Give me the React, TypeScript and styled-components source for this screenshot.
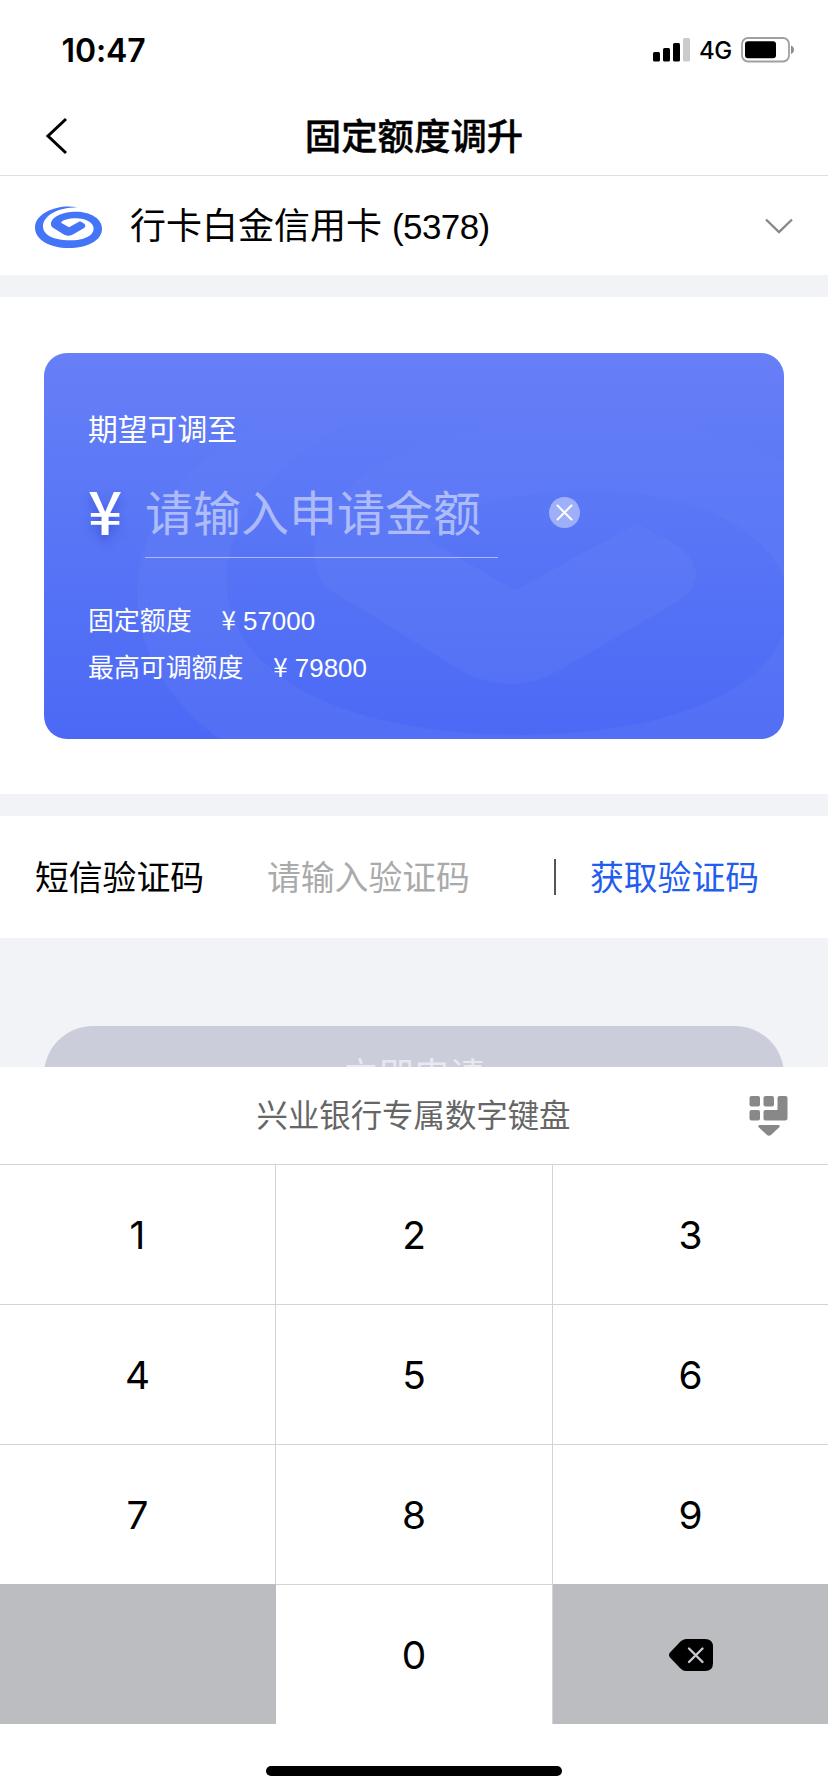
import React from "react";
import styled, { createGlobalStyle } from "styled-components";

const GlobalStyle = createGlobalStyle`
  * { box-sizing: border-box; }
  body {
    margin: 0;
    background: #fff;
    color: #000;
    font-family: "Liberation Sans", "Noto Sans CJK SC", sans-serif;
  }
`;

const Screen = styled.div`
  width: 828px;
  height: 1792px;
  display: flex;
  flex-direction: column;
  overflow: hidden;
  background: #fff;
`;

const StatusBar = styled.div`
  height: 98px;
  flex: none;
  display: flex;
  align-items: center;
  justify-content: space-between;
  padding: 1px 33px 0 61.5px;
  font-family: "Inter", sans-serif;
`;

const Clock = styled.span`
  padding-top: 1px;
  font-size: 32px;
  font-weight: 600;
  letter-spacing: -0.1px;
`;

const StatusIcons = styled.div`
  display: flex;
  align-items: center;
`;

const Network = styled.span`
  width: 51px;
  padding: 1px 0 0 9px;
  font-size: 24px;
  font-weight: 500;
  letter-spacing: -0.5px;
`;

const NavBar = styled.header`
  position: relative;
  height: 78px;
  flex: none;
  display: flex;
  align-items: center;
  justify-content: center;
  border-bottom: 1px solid #dfdfdf;
`;

const BackButton = styled.button`
  position: absolute;
  left: 44px;
  top: 18px;
  width: 26px;
  height: 40px;
  padding: 0;
  border: 0;
  background: none;
`;

const Title = styled.h1`
  margin: 0;
  padding-top: 2px;
  font-size: 36.4px;
  font-weight: 500;
  line-height: 78px;
  -webkit-text-stroke: 0.4px #000;
`;

const CardRow = styled.div`
  height: 99px;
  flex: none;
  display: flex;
  align-items: center;
  padding: 3px 35px 0;
`;

const CardName = styled.span`
  flex: 1;
  margin-left: 28px;
  font-size: 36px;
  line-height: 50px;
`;

const CardDigits = styled.span`
  font-size: 35px;
  letter-spacing: -0.6px;
`;

const Divider = styled.div`
  height: 22px;
  flex: none;
  background: #f2f3f7;
`;

const AmountSection = styled.section`
  height: 497px;
  flex: none;
  padding: 56px 44px 0;
`;

const AmountCard = styled.div`
  position: relative;
  height: 386px;
  padding: 0 44px;
  border-radius: 23px;
  overflow: hidden;
  color: #fff;
  background: linear-gradient(180deg, #677ff7 0%, #5a77f6 40%, #4b69f5 100%);
`;

const Watermark = styled.svg`
  position: absolute;
  inset: 0;
`;

const CardContent = styled.div`
  position: relative;
  display: flex;
  flex-direction: column;
  padding-top: 55px;
`;

const CardLabel = styled.div`
  font-size: 29.8px;
  line-height: 44px;
`;

const AmountRow = styled.div`
  display: flex;
  align-items: center;
  height: 84px;
  margin-top: 22px;
`;

const Currency = styled.span`
  width: 57px;
  margin-bottom: 15px;
  font-family: "Noto Sans CJK SC", sans-serif;
  font-size: 60px;
  font-weight: 500;
  line-height: 60px;
  text-shadow: 0 6px 10px rgba(40, 60, 190, 0.5);
`;

const AmountField = styled.div`
  width: 353px;
  height: 84px;
  border-bottom: 1px solid rgba(255, 255, 255, 0.5);
  color: rgba(255, 255, 255, 0.5);
  font-size: 48px;
  line-height: 81px;
  white-space: nowrap;
`;

const ClearButton = styled.button`
  width: 31px;
  height: 31px;
  margin: 0 0 7px 51px;
  padding: 0;
  border: 0;
  border-radius: 50%;
  background: rgba(255, 255, 255, 0.42);
  display: flex;
`;

const Limits = styled.div`
  margin-top: 40px;
`;

const LimitRow = styled.div`
  display: flex;
  gap: 30px;
  font-size: 25.9px;
  line-height: 47px;
`;

const Yen = styled.span`
  display: inline-block;
  width: 21.5px;
  font-family: "Noto Sans CJK SC", sans-serif;
  line-height: 30px;
`;

const CodeRow = styled.div`
  height: 122px;
  flex: none;
  display: flex;
  align-items: center;
  padding: 0 35px;
  font-size: 33.8px;
`;

const CodeLabel = styled.span`
  width: 232px;
  padding-bottom: 3px;
`;

const CodeField = styled.span`
  width: 287px;
  padding-bottom: 3px;
  color: #aaa;
`;

const Separator = styled.span`
  width: 2px;
  height: 36px;
  margin-bottom: 1px;
  background: #555;
`;

const SendCode = styled.span`
  margin-left: 34px;
  padding-bottom: 3px;
  color: #235cf0;
`;

const SubmitArea = styled.div`
  height: 129px;
  flex: none;
  padding: 88px 44px 0;
  overflow: hidden;
  background: #f2f3f7;
`;

const SubmitButton = styled.button`
  display: block;
  width: 740px;
  height: 98px;
  padding: 0 0 6px;
  border: 0;
  border-radius: 49px;
  background: #cbcdda;
  color: #e8e9f0;
  font: 35.5px "Liberation Sans", "Noto Sans CJK SC", sans-serif;
`;

const KeyboardHeader = styled.div`
  position: relative;
  height: 97px;
  flex: none;
  display: flex;
  align-items: center;
  justify-content: center;
  padding: 0 1px 5px 0;
  color: #666;
  font-size: 31.4px;
`;

const HideKeyboard = styled.svg`
  position: absolute;
  right: 40.5px;
  top: 28px;
`;

const Keypad = styled.div`
  flex: none;
  display: grid;
  grid-template-columns: 276px 277px 275px;
  grid-auto-rows: 140px;
`;

const Key = styled.button<{ $muted?: boolean; $edge?: boolean }>`
  display: flex;
  align-items: center;
  justify-content: center;
  padding: 0;
  border: 0 solid #d3d3d3;
  border-top-width: 1px;
  border-right-width: ${(p) => (p.$edge ? 0 : 1)}px;
  background: ${(p) => (p.$muted ? "#bcbdc1" : "#fff")};
  ${(p) => p.$muted && "border-color: #bcbdc1;"}
  color: #000;
  font-family: "Inter", sans-serif;
  font-size: 38.8px;
`;

const HomeArea = styled.div`
  flex: 1;
  display: flex;
  justify-content: center;
  padding-top: 42px;
`;

const HomeIndicator = styled.div`
  width: 296px;
  height: 10px;
  border-radius: 5px;
  background: #000;
`;

const SPIRAL =
  "M232 622C180 611 105 636 105 683C105 719 150 744 206 744C262 744 306 721 306 686C306 655 270 635 228 635C185 635 153 652 153 672C153 678 155 681 159 683L193 704Q207 711 220 703L251 685Q261 678 251 670L240 664L207 682L183 668C188 660 205 655 228 655C258 655 281 668 281 686C281 708 250 721 208 721C163 721 129 706 129 679C129 650 168 623 232 622Z";

const digits = ["1", "2", "3", "4", "5", "6", "7", "8", "9"];

const limits = [
  { label: "固定额度", value: "57000" },
  { label: "最高可调额度", value: "79800" },
];

export default function App() {
  return (
    <Screen>
      <GlobalStyle />
      <StatusBar>
        <Clock>10:47</Clock>
        <StatusIcons>
          <svg width="37" height="24" viewBox="0 0 37 24">
            <rect x="0" y="14" width="7" height="9.5" rx="1.5" />
            <rect x="10" y="10" width="7" height="13.5" rx="1.5" />
            <rect x="20" y="5" width="7" height="18.5" rx="1.5" />
            <rect x="30" y="0" width="7" height="23.5" rx="1.5" fill="#cbcbcb" />
          </svg>
          <Network>4G</Network>
          <svg width="54" height="26" viewBox="0 0 54 26">
            <rect x="1" y="1" width="47" height="23.5" rx="6" fill="none" stroke="#a0a0a0" strokeWidth="1.8" />
            <rect x="4" y="4.2" width="31" height="17" rx="3" />
            <path d="M50 8.500C54 10 54 15.500 50 17Z" fill="#8c8c8c" />
          </svg>
        </StatusIcons>
      </StatusBar>
      <NavBar>
        <BackButton aria-label="返回">
          <svg width="26" height="40" viewBox="0 0 26 40">
            <path d="M22 3L4 20L22 37" fill="none" stroke="#000" strokeWidth="3" />
          </svg>
        </BackButton>
        <Title>固定额度调升</Title>
      </NavBar>
      <CardRow>
        <svg width="67" height="42" viewBox="105 618 201 126">
          <path d={SPIRAL} fill="#4474f7" />
        </svg>
        <CardName>
          行卡白金信用卡 <CardDigits>(5378)</CardDigits>
        </CardName>
        <svg width="28" height="18" viewBox="0 0 28 18">
          <path d="M1 1.500L14 14L27 1.500" fill="none" stroke="#888" strokeWidth="2.400" />
        </svg>
      </CardRow>
      <Divider />
      <AmountSection>
        <AmountCard>
          <Watermark width="740" height="386" viewBox="44 353 740 386">
            <defs>
              <linearGradient id="watermarkFade" gradientUnits="userSpaceOnUse" x1="0" y1="618" x2="0" y2="744">
                <stop offset="0.1" stopColor="#fff" stopOpacity="0" />
                <stop offset="0.45" stopColor="#fff" stopOpacity="0.03" />
                <stop offset="1" stopColor="#fff" stopOpacity="0.045" />
              </linearGradient>
            </defs>
            <path d={SPIRAL} transform="translate(-251 -1933) scale(3.7)" fill="url(#watermarkFade)" />
          </Watermark>
          <CardContent>
            <CardLabel>期望可调至</CardLabel>
            <AmountRow>
              <Currency>¥</Currency>
              <AmountField>请输入申请金额</AmountField>
              <ClearButton aria-label="清除">
                <svg width="31" height="31" viewBox="0 0 31 31">
                  <path d="M8.500 8.500L22.500 22.500M22.500 8.500L8.500 22.500" stroke="#fff" strokeWidth="2" strokeLinecap="round" />
                </svg>
              </ClearButton>
            </AmountRow>
            <Limits>
              {limits.map((item) => (
                <LimitRow key={item.label}>
                  <span>{item.label}</span>
                  <span>
                    <Yen>¥</Yen>
                    {item.value}
                  </span>
                </LimitRow>
              ))}
            </Limits>
          </CardContent>
        </AmountCard>
      </AmountSection>
      <Divider />
      <CodeRow>
        <CodeLabel>短信验证码</CodeLabel>
        <CodeField>请输入验证码</CodeField>
        <Separator />
        <SendCode>获取验证码</SendCode>
      </CodeRow>
      <SubmitArea>
        <SubmitButton>立即申请</SubmitButton>
      </SubmitArea>
      <KeyboardHeader>
        兴业银行专属数字键盘
        <HideKeyboard width="39" height="42" viewBox="0 0 39 42" fill="#888">
          <rect x="0.500" y="1" width="10.500" height="10.500" rx="2" />
          <rect x="14.500" y="1" width="10.500" height="10.500" rx="2" />
          <rect x="0.500" y="15" width="10.500" height="10.500" rx="2" />
          <path d="M30.500 1H36.500Q38.500 1 38.500 3V23Q38.500 25.500 36 25.500H16.500Q14.500 25.500 14.500 23.500V17Q14.500 15 16.500 15H28.500V3Q28.500 1 30.500 1Z" />
          <path d="M11 30H29Q32 30 30 32.500L22 40Q20 41.500 18 40L10 32.500Q8 30 11 30Z" />
        </HideKeyboard>
      </KeyboardHeader>
      <Keypad>
        {digits.map((d, i) => (
          <Key key={d} $edge={i % 3 === 2}>
            {d}
          </Key>
        ))}
        <Key $muted />
        <Key>0</Key>
        <Key $muted $edge aria-label="删除">
          <svg width="44" height="32" viewBox="0 0 44 32">
            <path d="M17 0H36Q44 0 44 8V24Q44 32 36 32H17Q14 32 11.500 29.500L1 18.500Q-1 16 1 13.500L11.500 2.500Q14 0 17 0Z" />
            <path d="M20 9.500L33.500 23M33.500 9.500L20 23" stroke="#c8c8cc" strokeWidth="2.400" strokeLinecap="round" />
          </svg>
        </Key>
      </Keypad>
      <HomeArea>
        <HomeIndicator />
      </HomeArea>
    </Screen>
  );
}
